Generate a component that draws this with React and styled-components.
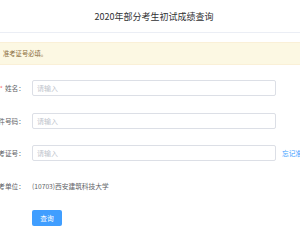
import React from "react";
import styled, { createGlobalStyle } from "styled-components";

const Global = createGlobalStyle`
  html, body { margin: 0; padding: 0; background: #fff; overflow: hidden; }
  body { font-family: "Noto Sans CJK SC", "Noto Sans", sans-serif; width: 300px; height: 240px; }
`;

const Page = styled.div`
  width: 300px;
  height: 240px;
  overflow: hidden;
  display: flex;
  flex-direction: column;
`;

const Header = styled.div`
  height: 33px;
  border-bottom: 1px solid #ebeef5;
  display: flex;
  align-items: center;
  justify-content: center;
  padding-left: 8px;
  box-sizing: border-box;
  font-size: 9px;
  color: #303133;
  flex-shrink: 0;
`;

const Alert = styled.div`
  margin-top: 9px;
  height: 23px;
  box-sizing: border-box;
  background: #fcf8e3;
  border-top: 1px solid #faf0d7;
  border-bottom: 1px solid #faf0d7;
  display: flex;
  align-items: center;
  padding-left: 3px;
  font-size: 6.3px;
  color: #8a6d3b;
  flex-shrink: 0;
`;

const Form = styled.div`
  margin-top: 15px;
  display: flex;
  flex-direction: column;
  gap: 16.5px;
`;

const Row = styled.div`
  display: flex;
  align-items: center;
  height: 16px;
  margin-left: -40px;
`;

const Label = styled.div`
  width: 72px;
  flex-shrink: 0;
  text-align: right;
  font-size: 6.7px;
  color: #606266;
  white-space: nowrap;
  padding-right: 7px;
  box-sizing: border-box;
`;

const Star = styled.span`
  color: #f56c6c;
  margin-right: 2px;
`;

const Input = styled.input`
  width: 244px;
  height: 16px;
  box-sizing: border-box;
  flex-shrink: 0;
  border: 1px solid #dcdfe6;
  border-radius: 2px;
  padding: 0 0 0 4px;
  font-family: inherit;
  font-size: 7px;
  color: #606266;
  outline: none;
  &::placeholder { color: #c0c4cc; }
`;

const Link = styled.span`
  margin-left: 6px;
  font-size: 6.7px;
  color: #409eff;
  white-space: nowrap;
`;

const Value = styled.span`
  font-size: 6.7px;
  color: #606266;
  white-space: nowrap;
`;

const Actions = styled.div`
  display: flex;
  padding-left: 32px;
`;

const Button = styled.button`
  width: 30px;
  height: 16px;
  border: none;
  border-radius: 2px;
  background: #409eff;
  color: #fff;
  font-family: inherit;
  font-size: 6.7px;
  padding: 0;
  cursor: pointer;
`;

export default function App() {
  return (
    <Page>
      <Global />
      <Header>2020年部分考生初试成绩查询</Header>
      <Alert>准考证号必填。</Alert>
      <Form>
        <Row>
          <Label><Star>*</Star>姓名：</Label>
          <Input placeholder="请输入" />
        </Row>
        <Row>
          <Label>证件号码：</Label>
          <Input placeholder="请输入" />
        </Row>
        <Row>
          <Label>准考证号：</Label>
          <Input placeholder="请输入" />
          <Link>忘记准考证号？</Link>
        </Row>
        <Row>
          <Label>报考单位：</Label>
          <Value>(10703)西安建筑科技大学</Value>
        </Row>
        <Actions>
          <Button>查询</Button>
        </Actions>
      </Form>
    </Page>
  );
}
